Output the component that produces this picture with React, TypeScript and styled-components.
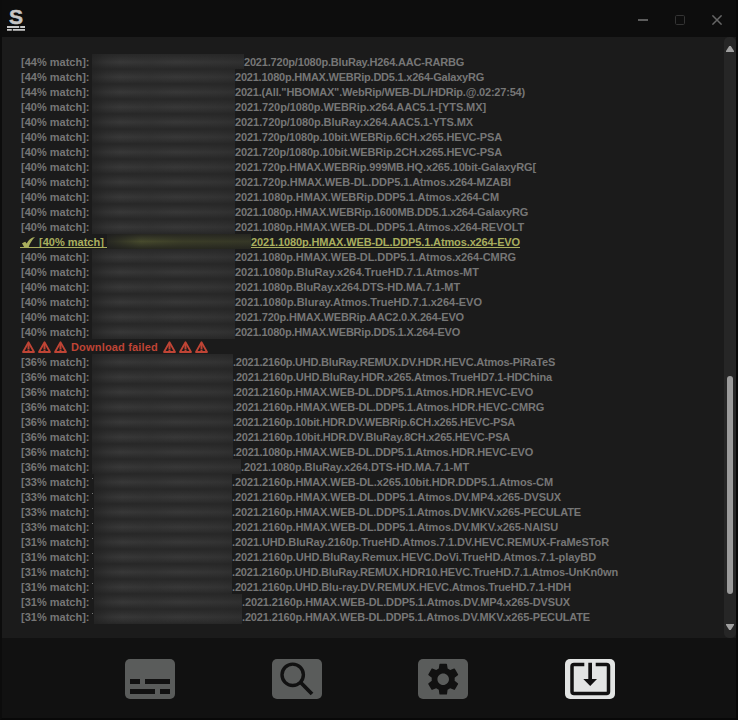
import React from "react";
import styled, { createGlobalStyle } from "styled-components";
import { MdSettings } from "react-icons/md";

const Global = createGlobalStyle`
  * { box-sizing: border-box; }
  body { margin: 0; background: #0d0d0d; font-family: "Liberation Sans", Arial, sans-serif; overflow: hidden; }
`;

const Window = styled.div`
  width: 738px;
  height: 720px;
  display: flex;
  flex-direction: column;
  background: #0d0d0d;
  border-left: 2px solid #0c0c0c;
  border-right: 2px solid #080808;
  border-bottom: 2px solid #080808;
`;

const TitleBar = styled.header`
  height: 37px;
  flex: none;
  display: flex;
  justify-content: space-between;
  align-items: flex-start;
  padding: 6px 14px 0 5px;
`;

const Logo = styled.div`
  width: 18px;
  display: flex;
  flex-direction: column;
  align-items: center;
  color: #c6c6c6;
  font: bold 21px/21px "Liberation Sans", Arial, sans-serif;
  -webkit-text-stroke: 0.5px #c6c6c6;
  svg { display: block; flex: none; margin-top: -1px; }
`;

const Controls = styled.div`
  display: flex;
  gap: 27px;
  padding-top: 9px;
  svg { display: block; }
`;

const Panel = styled.main`
  height: 601px;
  flex: none;
  display: flex;
  justify-content: space-between;
  background: #1b1b1b;
`;

const List = styled.div`
  padding: 17px 0 0 19px;
  font-size: 11px;
  font-weight: bold;
  line-height: 17px;
  color: #767676;
`;

const Row = styled.div`
  display: flex;
  height: 15px;
  white-space: pre;
`;

const Match = styled.span`
  width: 71px;
  flex: none;
`;

const Smudge = styled.span<{ $width: number; $tick?: boolean }>`
  width: ${(p) => p.$width}px;
  height: 15px;
  flex: none;
  background:
    linear-gradient(90deg, #202020b3 0, #2424244d 14px, transparent 28px, #2a2a2a4d 58px, transparent 84px, #2828284d 125px, #24242466 100%),
    linear-gradient(#272727, #2f2f2f 27%, #383838 54%, #2f2f2f 80%, #272727);
  border-left: ${(p) => (p.$tick ? "1px solid #1b1b1b" : "0")};
`;

const Name = styled.span<{ $width: number }>`
  width: ${(p) => p.$width}px;
  flex: none;
`;

const PickedRow = styled(Row)`
  color: #a9ae5e;
  margin-left: -1px;
`;

const PickedMatch = styled.span`
  width: 87px;
  height: 14px;
  flex: none;
  display: flex;
  border-bottom: 1px solid #a9ae5e;
  svg { margin: 3px 4px 0 2px; flex: none; }
`;

const PickedSmudge = styled.span`
  width: 144px;
  height: 15px;
  flex: none;
  background:
    linear-gradient(90deg, #1e1e1ecc, transparent 34px, #28282066 75px, #24242080),
    linear-gradient(#262621, #474a2d 50%, #26271f);
`;

const PickedName = styled.span<{ $width: number }>`
  width: ${(p) => p.$width}px;
  height: 14px;
  flex: none;
  border-bottom: 1px solid #a9ae5e;
`;

const FailedRow = styled(Row)`
  color: #bf4435;
`;

const FailedText = styled.span`
  width: 91px;
  flex: none;
`;

const WarningGroup = styled.span`
  display: flex;
  gap: 3px;
  padding: 2px 4px 0 1px;
  svg { display: block; }
`;

const ScrollTrack = styled.div`
  width: 12px;
  height: 601px;
  display: flex;
  flex-direction: column;
  align-items: center;
  justify-content: space-between;
  padding: 9px 0 8px;
  background: #262626;
  border-radius: 5px;
  svg { display: block; flex: none; }
`;

const Thumb = styled.div`
  width: 6px;
  height: 218px;
  margin-top: 294px;
  border-radius: 3px;
  background: #9b9b9b;
`;

const Toolbar = styled.footer`
  flex: 1;
  display: flex;
  justify-content: space-between;
  align-items: flex-start;
  padding: 21px 121px 0 123px;
  background: #111111;
`;

const ToolButton = styled.button<{ $active?: boolean }>`
  width: 50px;
  height: 40px;
  padding: 0;
  border: 0;
  border-radius: 5px;
  display: flex;
  align-items: center;
  justify-content: center;
  color: #111111;
  background: ${(p) => (p.$active ? "#e2e4e3" : "#5a5c5b")};
  svg { display: block; flex: none; }
`;

const Triangle = () => (
  <svg width="13" height="12" viewBox="0 0 13 12">
    <path d="M6.5 1.3 12 11H1Z" fill="none" stroke="#bf4435" strokeWidth="1.8" strokeLinejoin="round" />
    <path d="M6.5 3.500v4.500M6.5 8.600v1.400" stroke="#bf4435" strokeWidth="2" />
  </svg>
);

const Warnings = () => (
  <WarningGroup><Triangle /><Triangle /><Triangle /></WarningGroup>
);

type Entry = { match: number; left: number; name: string; tick?: boolean; end: number };

const before: Entry[] = [
  { match: 44, left: 244, name: "2021.720p/1080p.BluRay.H264.AAC-RARBG", end: 464 },
  { match: 44, left: 235, name: "2021.1080p.HMAX.WEBRip.DD5.1.x264-GalaxyRG", end: 484 },
  { match: 44, left: 235, name: "2021.(All.\"HBOMAX\".WebRip/WEB-DL/HDRip.@.02:27:54)", end: 525 },
  { match: 40, left: 235, name: "2021.720p/1080p.WEBRip.x264.AAC5.1-[YTS.MX]", end: 486 },
  { match: 40, left: 235, name: "2021.720p/1080p.BluRay.x264.AAC5.1-YTS.MX", end: 473 },
  { match: 40, left: 235, name: "2021.720p/1080p.10bit.WEBRip.6CH.x265.HEVC-PSA", end: 502 },
  { match: 40, left: 235, name: "2021.720p/1080p.10bit.WEBRip.2CH.x265.HEVC-PSA", end: 502 },
  { match: 40, left: 235, name: "2021.720p.HMAX.WEBRip.999MB.HQ.x265.10bit-GalaxyRG[", end: 536 },
  { match: 40, left: 235, name: "2021.720p.HMAX.WEB-DL.DDP5.1.Atmos.x264-MZABI", end: 511 },
  { match: 40, left: 235, name: "2021.1080p.HMAX.WEBRip.DDP5.1.Atmos.x264-CM", end: 499 },
  { match: 40, left: 235, name: "2021.1080p.HMAX.WEBRip.1600MB.DD5.1.x264-GalaxyRG", end: 528 },
  { match: 40, left: 235, name: "2021.1080p.HMAX.WEB-DL.DDP5.1.Atmos.x264-REVOLT", end: 524 },
];

const middle: Entry[] = [
  { match: 40, left: 235, name: "2021.1080p.HMAX.WEB-DL.DDP5.1.Atmos.x264-CMRG", end: 516 },
  { match: 40, left: 235, name: "2021.1080p.BluRay.x264.TrueHD.7.1.Atmos-MT", end: 479 },
  { match: 40, left: 235, name: "2021.1080p.BluRay.x264.DTS-HD.MA.7.1-MT", end: 460 },
  { match: 40, left: 235, name: "2021.1080p.Bluray.Atmos.TrueHD.7.1.x264-EVO", end: 482 },
  { match: 40, left: 235, name: "2021.720p.HMAX.WEBRip.AAC2.0.X.264-EVO", end: 464 },
  { match: 40, left: 235, name: "2021.1080p.HMAX.WEBRip.DD5.1.X.264-EVO", end: 460 },
];

const after: Entry[] = [
  { match: 36, left: 233, name: ".2021.2160p.UHD.BluRay.REMUX.DV.HDR.HEVC.Atmos-PiRaTeS", end: 555 },
  { match: 36, left: 233, name: ".2021.2160p.UHD.BluRay.HDR.x265.Atmos.TrueHD7.1-HDChina", end: 552 },
  { match: 36, left: 233, name: ".2021.2160p.HMAX.WEB-DL.DDP5.1.Atmos.HDR.HEVC-EVO", end: 533 },
  { match: 36, left: 233, name: ".2021.2160p.HMAX.WEB-DL.DDP5.1.Atmos.HDR.HEVC-CMRG", end: 544 },
  { match: 36, left: 233, name: ".2021.2160p.10bit.HDR.DV.WEBRip.6CH.x265.HEVC-PSA", end: 515 },
  { match: 36, left: 233, name: ".2021.2160p.10bit.HDR.DV.BluRay.8CH.x265.HEVC-PSA", end: 510 },
  { match: 36, left: 233, name: ".2021.1080p.HMAX.WEB-DL.DDP5.1.Atmos.HDR.HEVC-EVO", end: 533 },
  { match: 36, left: 241, name: ".2021.1080p.BluRay.x264.DTS-HD.MA.7.1-MT", end: 469 },
  { match: 33, left: 232, name: ".2021.2160p.HMAX.WEB-DL.x265.10bit.HDR.DDP5.1.Atmos-CM", tick: true, end: 553 },
  { match: 33, left: 232, name: ".2021.2160p.HMAX.WEB-DL.DDP5.1.Atmos.DV.MP4.x265-DVSUX", tick: true, end: 561 },
  { match: 33, left: 232, name: ".2021.2160p.HMAX.WEB-DL.DDP5.1.Atmos.DV.MKV.x265-PECULATE", tick: true, end: 581 },
  { match: 33, left: 232, name: ".2021.2160p.HMAX.WEB-DL.DDP5.1.Atmos.DV.MKV.x265-NAISU", tick: true, end: 558 },
  { match: 31, left: 232, name: ".2021.UHD.BluRay.2160p.TrueHD.Atmos.7.1.DV.HEVC.REMUX-FraMeSToR", tick: true, end: 609 },
  { match: 31, left: 232, name: ".2021.2160p.UHD.BluRay.Remux.HEVC.DoVi.TrueHD.Atmos.7.1-playBD", tick: true, end: 596 },
  { match: 31, left: 232, name: ".2021.2160p.UHD.BluRay.REMUX.HDR10.HEVC.TrueHD.7.1.Atmos-UnKn0wn", tick: true, end: 618 },
  { match: 31, left: 232, name: ".2021.2160p.UHD.Blu-ray.DV.REMUX.HEVC.Atmos.TrueHD.7.1-HDH", tick: true, end: 571 },
  { match: 31, left: 242, name: ".2021.2160p.HMAX.WEB-DL.DDP5.1.Atmos.DV.MP4.x265-DVSUX", tick: true, end: 570 },
  { match: 31, left: 242, name: ".2021.2160p.HMAX.WEB-DL.DDP5.1.Atmos.DV.MKV.x265-PECULATE", tick: true, end: 590 },
];

/* Spreads a release name evenly over its column width. */
function FittedText({ text, width }: { text: string; width: number }) {
  const ref = React.useRef<HTMLSpanElement>(null);
  const [spacing, setSpacing] = React.useState(0);
  React.useLayoutEffect(() => {
    const natural = ref.current!.getBoundingClientRect().width;
    setSpacing((width - natural) / text.length);
  }, [text, width]);
  return <span ref={ref} style={{ letterSpacing: `${spacing}px` }}>{text}</span>;
}

const Tick = styled.span`
  width: 2px;
  height: 1px;
  margin: 4px -1px 0 0;
  flex: none;
  background: #777777;
`;

function Entries({ items }: { items: Entry[] }) {
  return (
    <>
      {items.map((e) => (
        <Row key={e.name + e.left}>
          <Match>{`[${e.match}% match]:`}</Match>
          {e.tick && <Tick />}
          <Smudge $width={e.left - 92 - (e.tick ? 1 : 0)} $tick={e.tick} />
          <Name $width={e.end - e.left}><FittedText text={e.name} width={e.end - e.left} /></Name>
        </Row>
      ))}
    </>
  );
}

export default function App() {
  return (
    <Window>
      <Global />
      <TitleBar>
        <Logo>
          S
          <svg width="18" height="5" viewBox="0 0 18 5">
            <path d="M0 1h12.2M13.2 1H18M0 3.8h4.8M5.8 3.8H18" stroke="#c6c6c6" strokeWidth="1.8" />
          </svg>
        </Logo>
        <Controls>
          <svg width="10" height="10"><path d="M0 5h10" stroke="#5c5c5c" strokeWidth="2" /></svg>
          <svg width="10" height="10"><rect x=".5" y=".5" width="9" height="9" rx="1.2" fill="none" stroke="#343434" /></svg>
          <svg width="10" height="10"><path d="M.4.4l9.2 9.2M9.6.4.4 9.6" stroke="#666" strokeWidth="1.5" /></svg>
        </Controls>
      </TitleBar>
      <Panel>
        <List>
          <Entries items={before} />
          <PickedRow>
            <PickedMatch>
              <svg width="13" height="11" viewBox="0 0 13 11">
                <path d="M0 6.200 3.200 4.800 4.700 6.500C6.200 3.200 8.800.600 13 0 10 3 7.800 6.500 6.300 11H2.600Z" fill="#a9ae5e" />
              </svg>
              [40% match]
            </PickedMatch>
            <PickedSmudge />
            <PickedName $width={269}><FittedText text="2021.1080p.HMAX.WEB-DL.DDP5.1.Atmos.x264-EVO" width={269} /></PickedName>
          </PickedRow>
          <Entries items={middle} />
          <FailedRow>
            <Warnings />
            <FailedText><FittedText text="Download failed" width={87} /></FailedText>
            <Warnings />
          </FailedRow>
          <Entries items={after} />
        </List>
        <ScrollTrack>
          <svg width="8" height="6"><path d="M0 6V5L3.200 0H4.800L8 5V6Z" fill="#a0a0a0" /></svg>
          <Thumb />
          <svg width="8" height="6"><path d="M0 0V1L3.200 6H4.800L8 1V0Z" fill="#a0a0a0" /></svg>
        </ScrollTrack>
      </Panel>
      <Toolbar>
        <ToolButton aria-label="Subtitles">
          <svg width="50" height="40"><path d="M5 20h10v5H5ZM20 20h25v5H20ZM5 30h25v5H5ZM35 30h10v5H35Z" fill="currentColor" /></svg>
        </ToolButton>
        <ToolButton aria-label="Search">
          <svg width="50" height="40" fill="none" stroke="currentColor">
            <circle cx="20.700" cy="15.800" r="10.700" strokeWidth="3.400" />
            <path d="M28.700 23.500 40 35" strokeWidth="3.800" />
          </svg>
        </ToolButton>
        <ToolButton aria-label="Settings"><MdSettings size={38.4} /></ToolButton>
        <ToolButton aria-label="Downloads" $active>
          <svg width="50" height="40">
            <path d="M19.300 5.500H9Q7 5.500 7 7.500V32.500Q7 34.500 9 34.500H41.500Q43.500 34.500 43.500 32.500V7.500Q43.500 5.500 41.500 5.500H30.700" fill="none" stroke="currentColor" strokeWidth="3.500" />
            <path d="M23.300 3.700h3.700V20H32L25.200 27 18.300 20h5Z" fill="currentColor" />
          </svg>
        </ToolButton>
      </Toolbar>
    </Window>
  );
}
